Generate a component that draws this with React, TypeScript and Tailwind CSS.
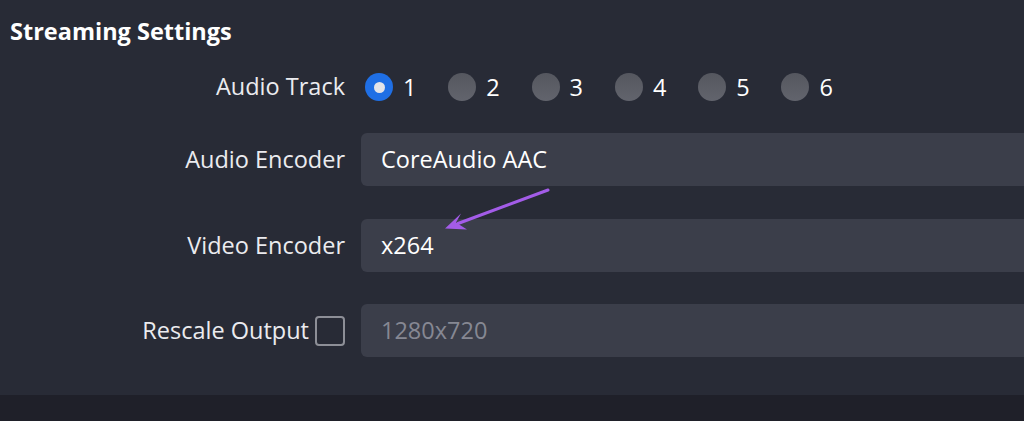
import React from 'react';

const tracks = [1, 2, 3, 4, 5, 6];

function Row({ label, children, mt }: { label: React.ReactNode; children: React.ReactNode; mt: string }) {
  return (
    <div className={`flex items-center ${mt}`}>
      <div className="w-[345px] shrink-0 flex justify-end items-center text-[23.5px] text-[#ebebef]">{label}</div>
      <div className="flex-1 ml-[16px] flex items-center">{children}</div>
    </div>
  );
}

function Field({ value, muted }: { value: string; muted?: boolean }) {
  return (
    <div className={`h-[53px] flex-1 bg-[#3b3e4a] rounded-l-[6px] flex items-center pl-[20px] text-[23.5px] ${muted ? 'text-[#868893]' : 'text-white'}`}>
      {value}
    </div>
  );
}

export default function App() {
  return (
    <div className="w-[1024px] h-[421px] bg-[#282b36] flex flex-col overflow-hidden font-['Open_Sans',sans-serif]">
      <div className="flex-1 relative">
        <div className="ml-[10px] mt-[15px] text-[23.5px] leading-[32px] font-bold text-white">Streaming Settings</div>

        <Row label="Audio Track" mt="mt-[26px] h-[28px]">
          <div className="flex items-center ml-[4px]">
            {tracks.map((t) => (
              <div key={t} className="w-[83.3px] flex items-center gap-[10px]">
                {t === 1 ? (
                  <span className="w-[28px] h-[28px] rounded-full bg-[#1f6fe5] flex items-center justify-center">
                    <span className="w-[11px] h-[11px] rounded-full bg-[#e4e4e8]" />
                  </span>
                ) : (
                  <span className="w-[28px] h-[28px] rounded-full bg-gradient-to-b from-[#55575f] to-[#62646d]" />
                )}
                <span className="text-[23.5px] leading-[28px] text-white">{t}</span>
              </div>
            ))}
          </div>
        </Row>

        <Row label="Audio Encoder" mt="mt-[32px]">
          <Field value="CoreAudio AAC" />
        </Row>

        <Row label="Video Encoder" mt="mt-[33px]">
          <Field value="x264" />
        </Row>

        <Row
          mt="mt-[32px]"
          label={
            <>
              <span>Rescale Output</span>
              <span className="ml-[6px] w-[30px] h-[30px] rounded-[4px] border-2 border-[#8d8f97]" />
            </>
          }
        >
          <Field value="1280x720" muted />
        </Row>

        <svg className="absolute inset-0 pointer-events-none" width="1024" height="395" viewBox="0 0 1024 395">
          <line x1="548" y1="190" x2="458" y2="223.5" stroke="#a35ce8" strokeWidth="3" strokeLinecap="round" />
          <polygon points="445,228.5 461,213.5 456,222.5 467,229.5" fill="#a35ce8" />
        </svg>
      </div>
      <div className="h-[26px] bg-[#1f2029]" />
    </div>
  );
}
